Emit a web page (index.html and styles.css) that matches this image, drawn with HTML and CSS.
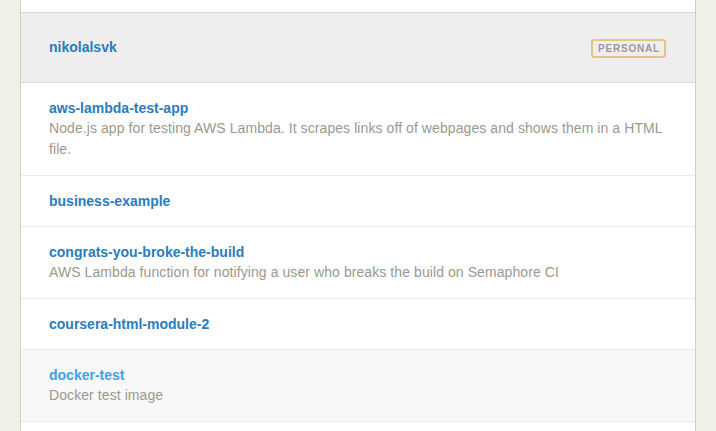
FILE: index.html
```html
<!DOCTYPE html>
<html>
<head>
<meta charset="utf-8">
<link rel="stylesheet" href="styles.css">
</head>
<body>
<div class="panel">
  <div class="top-gap"></div>
  <div class="group-header">
    <a class="owner" href="#">nikolalsvk</a>
    <span class="badge">Personal</span>
  </div>
  <ul class="repos">
    <li class="repo">
      <a class="name" href="#">aws-lambda-test-app</a>
      <p class="desc">Node.js app for testing AWS Lambda. It scrapes links off of webpages and shows them in a HTML file.</p>
    </li>
    <li class="repo">
      <a class="name" href="#">business-example</a>
    </li>
    <li class="repo">
      <a class="name" href="#">congrats-you-broke-the-build</a>
      <p class="desc">AWS Lambda function for notifying a user who breaks the build on Semaphore CI</p>
    </li>
    <li class="repo">
      <a class="name" href="#">coursera-html-module-2</a>
    </li>
    <li class="repo hover">
      <a class="name" href="#">docker-test</a>
      <p class="desc">Docker test image</p>
    </li>
  </ul>
  <div class="bottom-gap"></div>
</div>
</body>
</html>
```
FILE: styles.css
```css
html, body {
  margin: 0;
  padding: 0;
  background: #f1f0e8;
  font-family: "Liberation Sans", Arial, sans-serif;
  overflow: hidden;
}
.panel {
  margin: 0 20px;
  width: 674px;
  background: #fff;
  border-left: 1px solid #d3d1bb;
  border-right: 1px solid #d3d1bb;
}
.top-gap {
  height: 12px;
}
.bottom-gap {
  height: 40px;
}
.group-header {
  display: flex;
  align-items: center;
  justify-content: space-between;
  height: 69px;
  padding: 0 29px 0 28px;
  background: #eeeeee;
  border-top: 1px solid #d8d8d8;
  border-bottom: 1px solid #d8d8d8;
}
.owner {
  color: #2b7bc1;
  font-weight: bold;
  font-size: 14px;
  text-decoration: none;
  margin-top: -1px;
}
.badge {
  display: inline-block;
  box-sizing: border-box;
  height: 19px;
  line-height: 15px;
  padding: 0 4px 0 5px;
  border: 2px solid #dfc77f;
  border-radius: 3px;
  color: #9a9a98;
  font-size: 10px;
  font-weight: bold;
  text-transform: uppercase;
  letter-spacing: 0.8px;
  margin-top: 1px;
}
.repos {
  list-style: none;
  margin: 0;
  padding: 0;
}
.repo {
  padding: 16px 28px;
  border-bottom: 1px solid #ebebeb;
}
.repo.hover {
  background: #f8f8f8;
}
.name {
  display: block;
  color: #2b7bc1;
  font-weight: bold;
  font-size: 14px;
  line-height: 18px;
  text-decoration: none;
}
.repo.hover .name {
  color: #41a2ea;
}
.desc {
  margin: 0;
  padding-top: 1px;
  margin-bottom: -1px;
  color: #999990;
  font-size: 14px;
  line-height: 21px;
  letter-spacing: 0.08px;
}
```
